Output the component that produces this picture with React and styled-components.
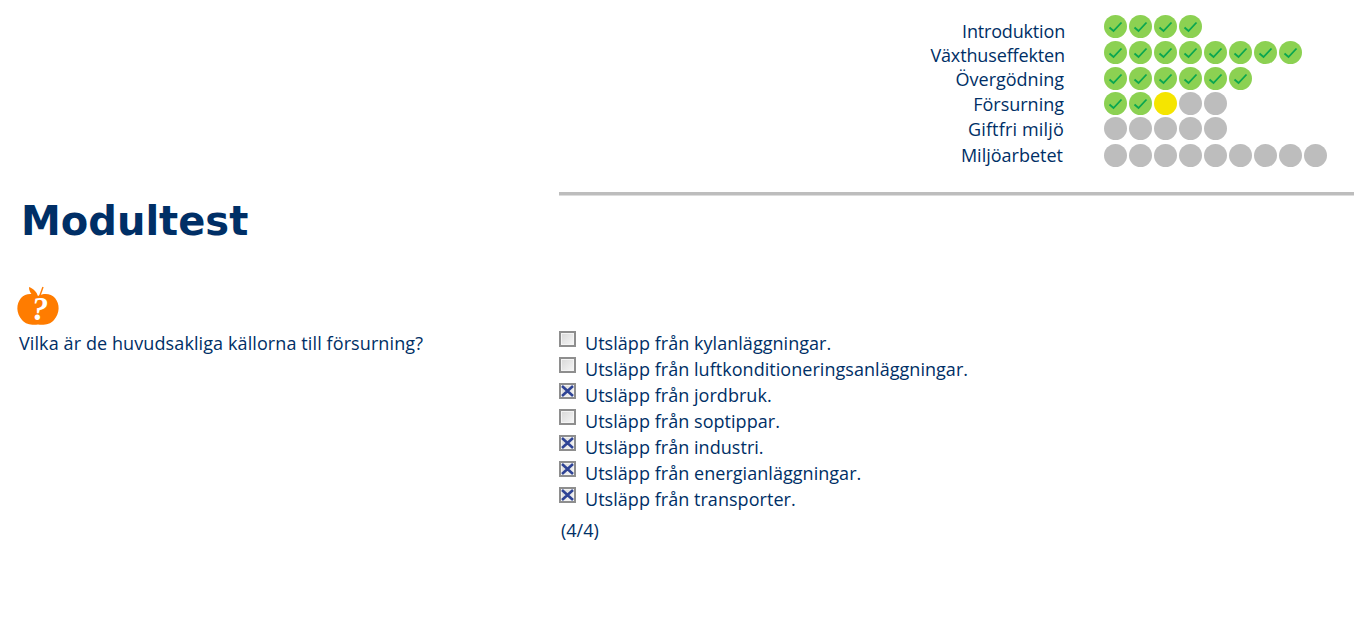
import React from 'react';
import styled, { createGlobalStyle } from 'styled-components';

const GlobalStyle = createGlobalStyle`
  html, body {
    margin: 0;
    padding: 0;
    background: white;
  }
  body {
    font-family: "Open Sans", "Noto Sans", sans-serif;
    font-size: 18px;
    color: #002f66;
  }
`;

const Page = styled.div`
  width: 1354px;
  height: 629px;
  overflow: hidden;
`;

const Progress = styled.div`
  padding-top: 15px;
  height: 177px;
`;

const ProgressRow = styled.div`
  display: flex;
  height: ${(p) => p.$height}px;
`;

const ProgressLabel = styled.div`
  width: ${(p) => p.$width}px;
  margin-right: ${(p) => 1104 - p.$width}px;
  margin-top: ${(p) => p.$top}px;
  text-align: right;
  line-height: 24px;
  font-size: 18px;
  letter-spacing: ${(p) => p.$spacing || 0}px;
  white-space: nowrap;
`;

const Dots = styled.div`
  display: flex;
  gap: 2px;
`;

const Dot = styled.div`
  width: 23px;
  height: 23px;
  border-radius: 50%;
  background: ${(p) => p.$color};
  display: flex;
  align-items: center;
  justify-content: center;
`;

const Rule = styled.div`
  margin-left: 559px;
  height: 3px;
  background: #bdbdbd;
  border-bottom: 1px solid #dddddd;
`;

const Title = styled.h1`
  margin: 0;
  padding: 0 0 0 21px;
  font-family: "DejaVu Sans", Verdana, sans-serif;
  font-size: 40px;
  line-height: 50px;
  font-weight: bold;
  color: #002f66;
`;

const Question = styled.div`
  display: flex;
  padding-top: 41px;
`;

const QuestionCol = styled.div`
  width: 559px;
  padding-left: 16px;
  box-sizing: border-box;
`;

const QuestionText = styled.div`
  padding-left: 3px;
  margin-top: 5px;
  line-height: 26px;
  letter-spacing: 0.1px;
`;

const Answers = styled.div`
  padding-top: 43px;
`;

const Answer = styled.div`
  display: flex;
  height: 26px;
  line-height: 26px;
  letter-spacing: 0.04px;
`;

const Box = styled.span`
  width: 17px;
  height: 16px;
  margin: 1px 9px 0 0;
  box-sizing: border-box;
  border: 2px solid #8e8e8e;
  background: linear-gradient(135deg, #d8d8d8, #f6f6f6);
  box-shadow: inset 0 0 0 1px #f4f4f4;
  display: flex;
  align-items: center;
  justify-content: center;
`;

const Score = styled.div`
  margin: 5px 0 0 2px;
  line-height: 26px;
`;

const AppleIcon = styled.svg`
  display: block;
  overflow: visible;
`;

const Check = () => (
  <svg width="15" height="12" viewBox="0 0 15 12">
    <path d="M1.5 6.5 L5.5 10 L13.5 1.5" fill="none" stroke="#0aa650" strokeWidth="1.8" />
  </svg>
);

const Cross = () => (
  <svg width="13" height="12" viewBox="0 0 13 12">
    <path d="M1 1 L12 11 M12 1 L1 11" fill="none" stroke="#2f4496" strokeWidth="2.6" />
  </svg>
);

const Apple = () => (
  <AppleIcon width="44" height="38" viewBox="0 0 44 38">
    <path d="M13 0 C18 2 21 5 22 10 C17 10 13 6 13 0 Z" fill="#ff7c00" />
    <path d="M23 11 L27 0" stroke="#ff7c00" strokeWidth="1.4" fill="none" />
    <path
      d="M22 9 C28 6 35 6.5 39 11 C44 17 44 26 38 33 C34 38 27 38 22 37.5 C17 38 10 38 6 33 C0 26 0 17 5 11 C9 6.5 16 6 22 9 Z"
      fill="#ff7c00"
    />
    <text
      x="24"
      y="32.5"
      textAnchor="middle"
      fontFamily="'Liberation Serif', serif"
      fontWeight="bold"
      fontStyle="italic"
      fontSize="33"
      fill="white"
    >
      ?
    </text>
  </AppleIcon>
);

const modules = [
  { name: 'Introduktion', height: 26, top: 4, width: 1065, spacing: -0.17, dots: 'gggg' },
  { name: 'Växthuseffekten', height: 26, top: 2, width: 1065, spacing: -0.13, dots: 'gggggggg' },
  { name: 'Övergödning', height: 25, top: 0, width: 1064, dots: 'gggggg' },
  { name: 'Försurning', height: 25, top: 0, width: 1064, dots: 'ggyoo' },
  { name: 'Giftfri miljö', height: 27, top: 0, width: 1064, spacing: 0.17, dots: 'ooooo' },
  { name: 'Miljöarbetet', height: 23, top: -1, width: 1063, dots: 'ooooooooo' },
];

const dotColors = { g: '#8cd152', y: '#f5e500', o: '#bdbdbd' };

const answers = [
  ['Utsläpp från kylanläggningar.', false],
  ['Utsläpp från luftkonditioneringsanläggningar.', false],
  ['Utsläpp från jordbruk.', true],
  ['Utsläpp från soptippar.', false],
  ['Utsläpp från industri.', true],
  ['Utsläpp från energianläggningar.', true],
  ['Utsläpp från transporter.', true],
];

const App = () => {
  return (
    <Page>
      <GlobalStyle />
      <Progress>
        {modules.map((m) => (
          <ProgressRow key={m.name} $height={m.height}>
            <ProgressLabel $width={m.width} $top={m.top} $spacing={m.spacing}>{m.name}</ProgressLabel>
            <Dots>
              {m.dots.split('').map((d, index) => (
                <Dot key={index} $color={dotColors[d]}>
                  {d === 'g' && <Check />}
                </Dot>
              ))}
            </Dots>
          </ProgressRow>
        ))}
      </Progress>
      <Rule />
      <Title>Modultest</Title>
      <Question>
        <QuestionCol>
          <Apple />
          <QuestionText>Vilka är de huvudsakliga källorna till försurning?</QuestionText>
        </QuestionCol>
        <Answers>
          {answers.map(([text, checked]) => (
            <Answer key={text}>
              <Box>{checked && <Cross />}</Box>
              {text}
            </Answer>
          ))}
          <Score>(4/4)</Score>
        </Answers>
      </Question>
    </Page>
  );
};

export default App;
